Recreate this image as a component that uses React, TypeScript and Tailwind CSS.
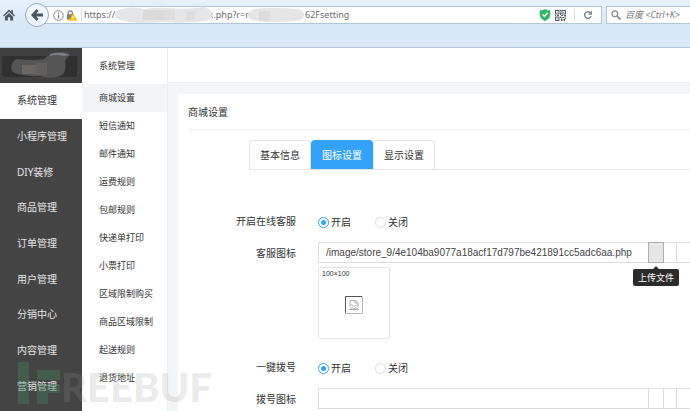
import { useState } from "react";
import clsx from "clsx";

const mainMenu = [
  "系统管理",
  "小程序管理",
  "DIY装修",
  "商品管理",
  "订单管理",
  "用户管理",
  "分销中心",
  "内容管理",
  "营销管理",
];

const subMenu = [
  "商城设置",
  "短信通知",
  "邮件通知",
  "运费规则",
  "包邮规则",
  "快递单打印",
  "小票打印",
  "区域限制购买",
  "商品区域限制",
  "起送规则",
  "退货地址",
];

const tabs = ["基本信息", "图标设置", "显示设置"];

const address =
  "https://" + "\u00a0".repeat(40) + "x.php?r=r" + "\u00a0".repeat(24) + "62Fsetting";

function HomeIcon() {
  return (
    <svg viewBox="0 0 12 12" className="h-3 w-3 shrink-0" fill="#4d5a66">
      <path d="M6 .6 0 6.4l.9 1L6 2.7l5.100 4.700.9-1-2-2V1.300H8.300v1.500z" />
      <path d="M6 3.900 1.900 7.700V11.500h3V8.200h2.200v3.300h3V7.700z" />
    </svg>
  );
}

function BackIcon() {
  return (
    <svg viewBox="0 0 12 12" className="h-3 w-3" fill="none" stroke="#4a5661" strokeWidth="2.800">
      <path d="M6.600 1 1.900 6l4.700 5M2.200 6H12" />
    </svg>
  );
}

function InfoIcon() {
  return (
    <svg viewBox="0 0 11 11" className="h-[11px] w-[11px] shrink-0">
      <circle cx="5.500" cy="5.500" r="4.800" fill="none" stroke="#858585" />
      <path d="M5.500 4.600v3.800M5.500 2.500v1.200" stroke="#777" strokeWidth="1.200" />
    </svg>
  );
}

function LockIcon() {
  return (
    <svg viewBox="0 0 11 11" className="h-[11px] w-[11px] shrink-0">
      <path d="M2.200 5V3a2.100 2.100 0 0 1 4.200 0v2" fill="none" stroke="#808080" strokeWidth="1.300" />
      <rect x=".8" y="4.200" width="7" height="5.300" rx=".6" fill="#808080" />
      <path d="M7 3.800 11 10.600H3z" fill="#ffbf00" stroke="#ffbf00" strokeWidth=".5" strokeLinejoin="round" />
      <path d="M7 6v2.300M7 8.900v.9" stroke="#fff" />
    </svg>
  );
}

function ShieldIcon() {
  return (
    <svg viewBox="0 0 12 12" className="h-3 w-3 shrink-0">
      <path d="M1 1.500C3 1.500 4.500 1.200 6 .5c1.500.7 3 1 5 1v4.300c0 2.600-2 4.700-5 5.900-3-1.200-5-3.300-5-5.900z" fill="#35b558" stroke="#4ab6b0" strokeWidth=".8" />
      <path d="m3.600 5.500 1.900 1.900 3.200-3.700" fill="none" stroke="#fff" strokeWidth="1.400" />
    </svg>
  );
}

function QrIcon() {
  return (
    <svg viewBox="0 0 11 11" className="h-[11px] w-[11px] shrink-0" fill="#565f69">
      <path d="M0 0h4.500v4.500H0zM1 1v2.500h2.500V1zM6.500 0H11v4.500H6.500zM7.500 1v2.500H10V1zM0 6.500h4.500V11H0zM1 7.500V10h2.500V7.500z" fillRule="evenodd" />
      <path d="M1.800 1.800h1v1h-1zM8.300 1.800h1v1h-1zM1.800 8.300h1v1h-1zM5 0h1v1.500H5zM5 2.500h1V5H5zM2 5h2v1H2zM0 5h1v1H0zM6 5h2v1H6zM9 5h2v1.500H9zM5 6.500h1.500V8H5zM7 7h2v1H7zM9.500 7.500H11v1.500H9.500zM6 8.500h1.500V11H6zM8.500 9H10v2H8.500z" />
    </svg>
  );
}

function ReloadIcon() {
  return (
    <svg viewBox="0 0 10 10" className="h-[10px] w-[10px] shrink-0">
      <path d="M7.300 2.700A3.300 3.300 0 1 0 8 6.300" fill="none" stroke="#7d8995" strokeWidth="1.500" />
      <path d="M9 .6v4.100H4.900z" fill="#7d8995" />
    </svg>
  );
}

function SearchIcon() {
  return (
    <svg viewBox="0 0 10 10" className="h-[10px] w-[10px] shrink-0" fill="none" stroke="#858585">
      <circle cx="3.800" cy="3.800" r="2.900" strokeWidth="1.300" />
      <path d="m6 6 3.500 3.500" strokeWidth="1.700" />
    </svg>
  );
}

function BrokenImage() {
  return (
    <svg viewBox="0 0 18 18" className="h-[18px] w-[18px]" fill="none">
      <path d="M.5 17V.5H17" stroke="#555" />
      <path d="M17.500.5v17H.5" stroke="#b5b5b5" />
      <path d="M5 10.500v-6h5.500l2.500 2v4l-2-1.500-2 1.500-2-2zM10 4.500V7h3" stroke="#b0b0b0" />
      <path d="M4.500 13.500 7 11.500l2 1.500 2-1.500 2.500 2z" stroke="#b0b0b0" />
    </svg>
  );
}

function BrowserBar() {
  return (
    <header className="h-12 border-b border-[#afc6de] bg-linear-to-b from-[#e6f1fb] via-[#d9e8f7] to-[#d9e8f7] pt-[3px] font-['Noto_Sans','Noto_Sans_CJK_SC',sans-serif]">
      <div className="flex h-6 items-center">
        <div className="flex w-[25px] justify-end pl-1">
          <button type="button" aria-label="Home" className="mr-2.5">
            <HomeIcon />
          </button>
        </div>
        <button
          type="button"
          aria-label="Back"
          className="z-10 flex h-6 w-6 shrink-0 items-center justify-center rounded-full border border-[#94a9bf] bg-[#eef5fc]"
        >
          <BackIcon />
        </button>
        <div className="relative -ml-1.5 flex h-[18px] min-w-0 flex-1 items-center border border-[#b3c7dc] bg-white pl-[9px]">
          <InfoIcon />
          <span className="ml-0.5">
            <LockIcon />
          </span>
          <span className="ml-1 h-3 w-px bg-[#dcdcdc]" />
          <input
            aria-label="Address"
            defaultValue={address}
            className="ml-0.5 min-w-0 flex-1 bg-transparent text-[9px] text-[#6b6b6b] outline-none"
          />
          {/* hidden parts of the address */}
          <svg viewBox="0 0 240 17" className="absolute top-0 left-[70px] h-[17px] w-60">
            <path d="M8 2q10-3 22 0q14-2 24-1q20 2 36-1q8 3 8 7q0 6-8 7q-20 3-42 1q-18 2-32 0q-14-2-15-6q0-6 7-7z" fill="#e5e6e8" />
            <path d="M29 3h11v10H29zM40 3h10v10H40z" fill="#dadadb" />
            <path d="M50 3h11v10H50zM72 4h9v9h-9z" fill="#dededf" />
            <path d="M141 2q14-2 42 0q7 1 7 6t-7 6q-26 2-42 0q-7-1-7-6t7-6z" fill="#e6e6e7" />
            <path d="M145 4h11v10h-11z" fill="#dcdcdd" />
          </svg>
          <div className="flex items-center gap-1 pr-2">
            <ShieldIcon />
            <QrIcon />
            <span className="ml-1 h-3 w-px bg-[#dcdcdc]" />
            <button type="button" aria-label="Reload" className="ml-1">
              <ReloadIcon />
            </button>
          </div>
        </div>
        <label className="ml-1 flex h-[18px] w-[84px] shrink-0 items-center gap-1 border border-r-0 border-[#b3c7dc] bg-white pl-1">
          <SearchIcon />
          <input
            aria-label="Search"
            placeholder="百度 <Ctrl+K>"
            className="min-w-0 flex-1 bg-transparent text-[9px] italic outline-none placeholder:text-[#777]"
          />
        </label>
      </div>
    </header>
  );
}

function Logo() {
  return (
    <div className="flex h-[35px] items-center justify-center bg-[#3f3f3f]">
      <svg viewBox="0 0 78 30" className="h-[30px] w-[78px]">
        <rect x="0" y="5" width="75" height="21" rx="2" fill="#303030" />
        <path d="M16 8q14 2 26 0 5-6 16-7 8 0 10 3-4 3-5 6 2 13-5 15-10 4-20 0-10 1-22-2-7-1-7-7 1-7 7-8z" fill="#545454" />
        <path d="M20 14h14v9H20z" fill="#696664" />
        <path d="M34 12h11v12H34z" fill="#625f5d" />
        <path d="M48 3q10-3 20 1l-6 1q-8-2-14 0z" fill="#78818b" />
      </svg>
    </div>
  );
}

interface SwitchRadiosProps {
  name: string;
  label: string;
}

function SwitchRadios({ name, label }: SwitchRadiosProps) {
  const [value, setValue] = useState("开启");

  return (
    <div
      role="radiogroup"
      aria-labelledby={`${name}-label`}
      className="grid grid-cols-[118px_1fr] gap-x-[22px]"
    >
      <span id={`${name}-label`} className="text-right leading-[18px]">
        {label}
      </span>
      <div className="flex h-5 items-center gap-6">
        {["开启", "关闭"].map((option) => (
          <label key={option} className="flex items-center gap-0.5">
            <input
              type="radio"
              name={name}
              checked={value === option}
              onChange={() => setValue(option)}
              className="h-[11px] w-[11px] appearance-none rounded-full border border-[#dcdcdc] bg-white p-0.5 checked:border-[#33a3fa] checked:bg-[#33a3fa] checked:bg-clip-content"
            />
            {option}
          </label>
        ))}
      </div>
    </div>
  );
}

interface FileFieldProps {
  id: string;
  label: string;
  defaultValue?: string;
  uploading?: boolean;
}

function FileField({ id, label, defaultValue, uploading }: FileFieldProps) {
  return (
    <div className="grid grid-cols-[118px_1fr] gap-x-[22px]">
      <label htmlFor={id} className="text-right leading-[22px]">
        {label}
      </label>
      <div className="flex h-[21px] border-y border-l border-[#dcdcdc]">
        <input
          id={id}
          defaultValue={defaultValue}
          className="min-w-0 flex-1 px-[7px] font-['Liberation_Sans',sans-serif] text-[10px] text-[#444] outline-none"
        />
        <div className="relative flex">
          <button
            type="button"
            aria-label="上传文件"
            className={clsx(
              "-my-px w-4 border",
              uploading ? "border-[#adadad] bg-[#e6e6e6]" : "border-[#dcdcdc]",
            )}
          />
          {uploading && (
            <div
              role="tooltip"
              className="absolute top-[26px] left-1/2 -translate-x-1/2 rounded-[2px] bg-[#2b2b2b] px-[5px] text-[9px] leading-[17px] whitespace-nowrap text-white"
            >
              <span className="absolute -top-[3px] left-1/2 -translate-x-1/2 border-x-[3px] border-b-[3px] border-x-transparent border-b-[#2b2b2b]" />
              上传文件
            </div>
          )}
        </div>
        <button type="button" aria-label="选择文件" className="w-[13px] border-r border-[#dcdcdc]" />
        <button type="button" aria-label="删除文件" className="w-[13px]" />
      </div>
    </div>
  );
}

function Watermark() {
  return (
    <div className="pointer-events-none absolute bottom-0 left-[18px] flex items-end">
      <svg viewBox="0 0 43 42" className="mb-[7px] h-[42px] w-[43px] opacity-40" fill="#45805e">
        <path d="M0 0h11v42H0zM19 8h23v10H19zM19 22h23v9H19zM19 31h11v11H19z" />
      </svg>
      <span className="font-['Lato',sans-serif] text-[40px] leading-12 font-black text-[#999]/20">
        REEBUF
      </span>
    </div>
  );
}

export default function App() {
  const [activeTab, setActiveTab] = useState("图标设置");

  return (
    <div className="relative flex h-screen flex-col overflow-hidden bg-white font-['Noto_Sans','Noto_Sans_CJK_SC',sans-serif] text-[10px] text-[#333]">
      <BrowserBar />

      <div className="flex min-h-0 flex-1">
        {/* Main menu */}
        <aside className="w-[82px] shrink-0 bg-[#444]">
          <Logo />
          <nav className="grid h-[321px] auto-rows-fr">
            {mainMenu.map((item, index) => (
              <a
                key={item}
                href="#"
                className={clsx(
                  "flex items-center pl-[17px] whitespace-nowrap",
                  index === 0 ? "bg-white text-[#333]" : "text-[#e6e6e6]",
                )}
              >
                {item}
              </a>
            ))}
          </nav>
        </aside>

        {/* Sub menu */}
        <aside className="w-[86px] shrink-0 border-r border-[#eee] text-[9px]">
          <h1 className="flex h-9 items-center pl-[17px]">系统管理</h1>
          <nav>
            {subMenu.map((item, index) => (
              <a
                key={item}
                href="#"
                className={clsx(
                  "flex h-7 items-center pl-[17px] whitespace-nowrap",
                  index === 0 && "bg-[#f3f4f6]",
                )}
              >
                {item}
              </a>
            ))}
          </nav>
        </aside>

        <main className="flex min-w-0 flex-1 flex-col">
          <div className="h-[35px] shrink-0 border-b border-[#f0f0f0]" />
          <div className="flex-1 bg-[#f4f5f7] pt-[11px] pl-[10px]">
            <section className="h-full bg-white">
              <h2 className="ml-[10px] h-9 border-b border-[#eee] leading-9">商城设置</h2>

              <div role="tablist" className="mt-[10px] ml-[71px] flex border-b border-[#e5e5e5]">
                {tabs.map((tab) => (
                  <button
                    key={tab}
                    type="button"
                    role="tab"
                    aria-selected={activeTab === tab}
                    onClick={() => setActiveTab(tab)}
                    className={clsx(
                      "h-[29px] w-[62px] rounded-t-[4px] border border-b-0",
                      activeTab === tab
                        ? "border-[#33a3fa] bg-[#33a3fa] text-white"
                        : "border-[#e5e5e5]",
                    )}
                  >
                    {tab}
                  </button>
                ))}
              </div>

              <form className="pt-[42px]">
                <SwitchRadios name="service" label="开启在线客服" />
                <div className="mt-[10px]">
                  <FileField
                    id="service-icon"
                    label="客服图标"
                    defaultValue="/image/store_9/4e104ba9077a18acf17d797be421891cc5adc6aa.php"
                    uploading
                  />
                </div>
                <div className="mt-[3px] ml-[140px] flex h-[72px] w-[72px] flex-col items-center rounded-[2px] border border-[#e5e5e5]">
                  <span className="self-start pl-[3px] font-['Liberation_Sans',sans-serif] text-[7px] leading-3">
                    100×100
                  </span>
                  <div className="mt-4">
                    <BrokenImage />
                  </div>
                </div>

                <div className="mt-[19px]">
                  <SwitchRadios name="dial" label="一键拨号" />
                </div>
                <div className="mt-[10px]">
                  <FileField id="dial-icon" label="拨号图标" />
                </div>
              </form>
            </section>
          </div>
        </main>
      </div>

      <Watermark />
    </div>
  );
}
